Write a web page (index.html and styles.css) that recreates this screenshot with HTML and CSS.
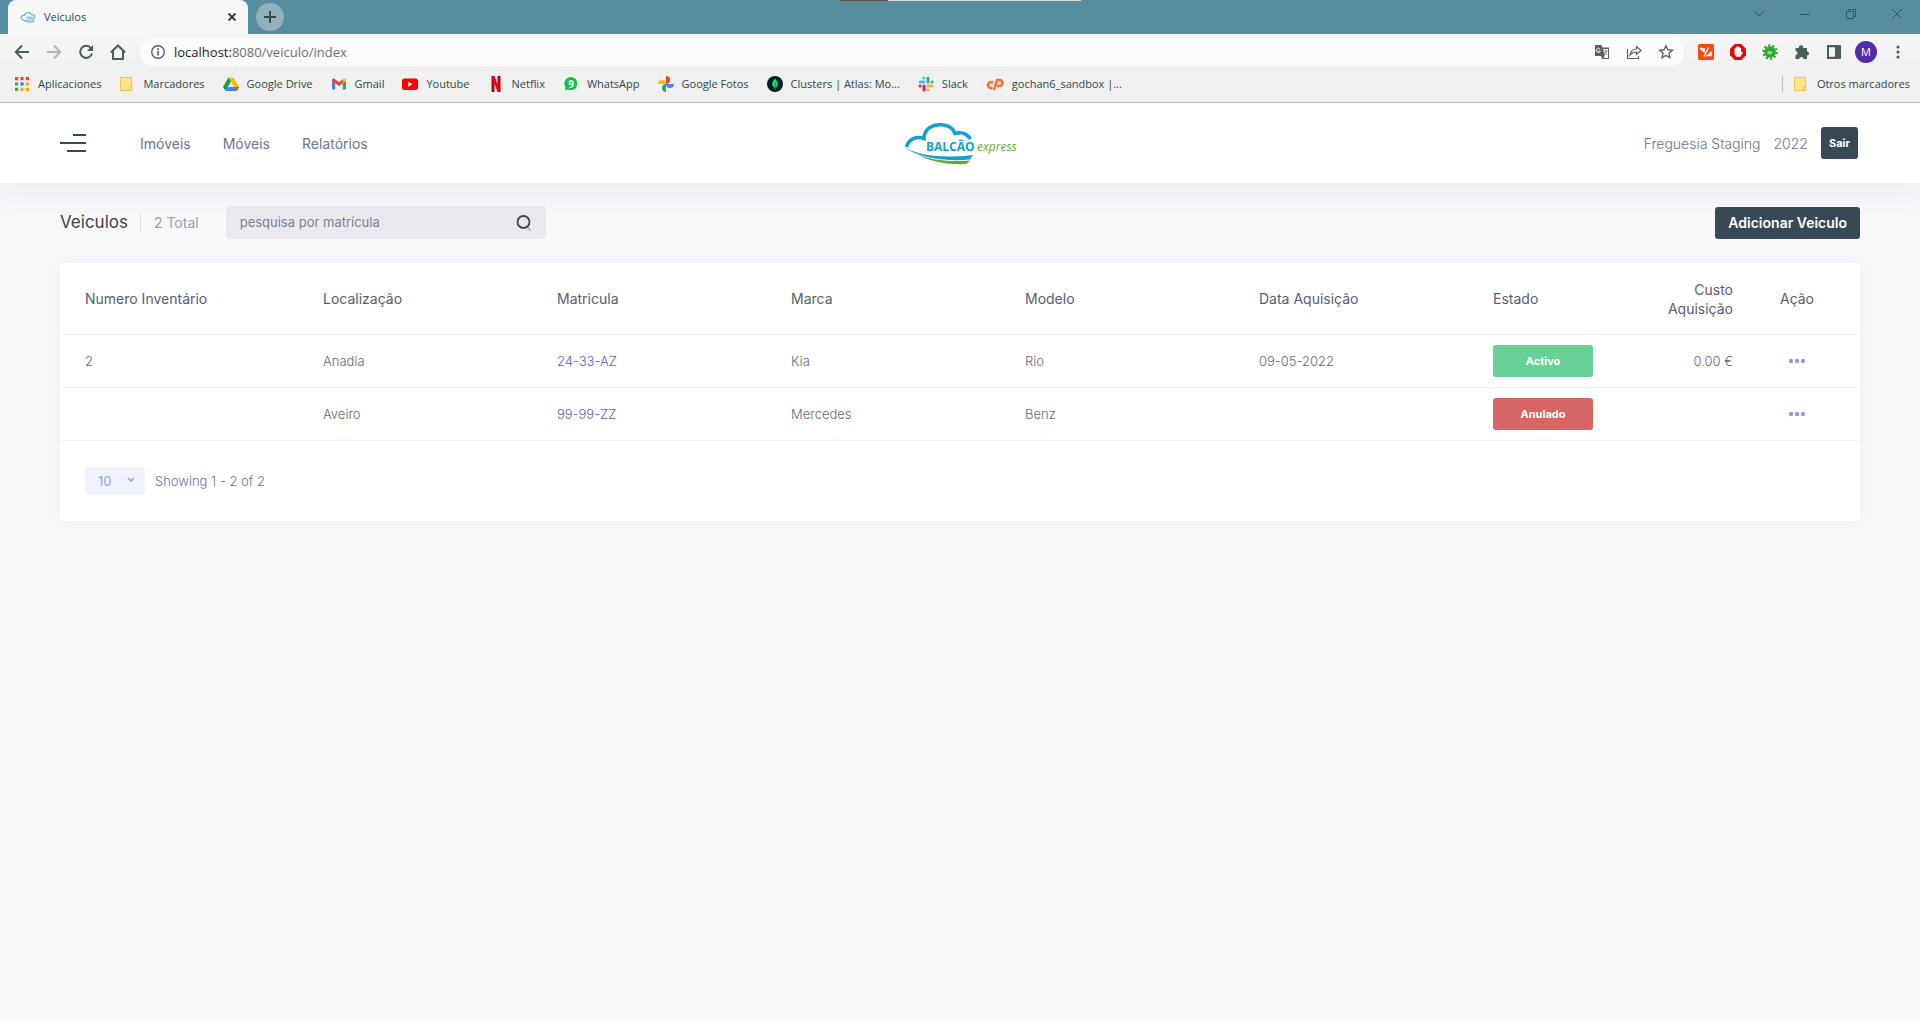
FILE: index.html
```html
<!DOCTYPE html>
<html lang="pt">
<head>
<meta charset="utf-8">
<meta name="viewport" content="width=device-width, initial-scale=1">
<title>Veiculos</title>
<link rel="stylesheet" href="styles.css">
</head>
<body>
<div class="browser">
  <div class="tabstrip">
    <div class="top-mark"></div>
    <div class="tab">
      <svg class="favicon" width="16" height="16" viewBox="0 0 16 16"><path d="M1 9.500C1 7 3 6 4.500 6.500 5 3.500 10 2.500 11.500 5.500 14 5.500 15 7 15 8" fill="none" stroke="#4fb0d8" stroke-width="1.200"/><path d="M6 7.500h9v3H7z" fill="#9ccbe0"/><path d="M1 10c4 2 8 2.500 13 1.500" fill="none" stroke="#4fb0d8"/><path d="M4 12c4 1.500 7 1.500 10 .8" fill="none" stroke="#9ccf7a" stroke-width="1.200"/></svg>
      <span class="tab-title">Veiculos</span>
      <button class="icon-button tab-close" aria-label="Fechar separador"><svg width="10" height="10" viewBox="0 0 10 10"><path d="M1.500 1.500l7 7M8.500 1.500l-7 7" stroke="#27413f" stroke-width="1.800"/></svg></button>
    </div>
    <button class="new-tab" aria-label="Novo separador"><svg width="12" height="12" viewBox="0 0 12 12"><path d="M6 0v12M0 6h12" stroke="#2c4a50" stroke-width="2"/></svg></button>
    <div class="window-controls">
      <button class="icon-button" aria-label="Procurar separadores"><svg width="12" height="12" viewBox="0 0 12 12"><path d="M1 3l5 5 5-5" fill="none" stroke="#33565f"/></svg></button>
      <button class="icon-button" aria-label="Minimizar"><svg width="12" height="12" viewBox="0 0 12 12"><path d="M1 6.500h10" stroke="#33565f"/></svg></button>
      <button class="icon-button" aria-label="Restaurar"><svg width="12" height="12" viewBox="0 0 12 12"><path d="M1.500 3.500h7v7h-7zM3.500 3.500v-2h7v7h-2" fill="none" stroke="#33565f"/></svg></button>
      <button class="icon-button" aria-label="Fechar"><svg width="12" height="12" viewBox="0 0 12 12"><path d="M1 1l10 10M11 1L1 11" stroke="#33565f"/></svg></button>
    </div>
  </div>
  <div class="toolbar">
    <button class="icon-button" aria-label="Voltar"><svg width="16" height="16" viewBox="0 0 16 16"><path d="M15 8H2.500M8 1.500L1.800 8 8 14.500" fill="none" stroke="#48605c" stroke-width="2"/></svg></button>
    <button class="icon-button" aria-label="Avançar"><svg width="16" height="16" viewBox="0 0 16 16"><path d="M1 8h12.500M8 1.500L14.200 8 8 14.500" fill="none" stroke="#b0b7b5" stroke-width="2"/></svg></button>
    <button class="icon-button" aria-label="Recarregar"><svg width="16" height="16" viewBox="0 0 16 16"><path d="M13 4.200A6 6 0 1 0 14 9.500" fill="none" stroke="#48605c" stroke-width="2"/><path d="M15 1v6H9z" fill="#48605c"/></svg></button>
    <button class="icon-button" aria-label="Página inicial"><svg width="16" height="16" viewBox="0 0 16 16"><path d="M.8 8.500L8 1.500l7.200 7M3 7v8h10V7" fill="none" stroke="#48605c" stroke-width="2"/></svg></button>
    <div class="omnibox">
      <svg width="16" height="16" viewBox="0 0 16 16"><circle cx="8" cy="8" r="6.300" fill="none" stroke="#5c6063" stroke-width="1.400"/><path d="M8 7v4.500M8 4.300v1.700" stroke="#5c6063" stroke-width="1.700"/></svg>
      <span class="url"><span class="url-host">localhost:</span>8080/veiculo/index</span>
      <button class="icon-button" aria-label="Traduzir"><svg width="16" height="16" viewBox="0 0 16 16"><path d="M1 1h6.500l1 2.500H15V15H8l-1-3H1z" fill="#5c6063"/><path d="M9 5h5v9H9.500l1.300-2.500z" fill="#fff"/><path d="M10 7h3.500M11.700 6v1M10.500 10.500L13 7.500M10.700 8.500L13 11" stroke="#5c6063" fill="none" stroke-width=".8"/><path d="M6 5.200A2 2 0 1 0 6.300 7H4.500" fill="none" stroke="#fff"/></svg></button>
      <button class="icon-button" aria-label="Partilhar"><svg width="16" height="16" viewBox="0 0 16 16"><path d="M1.500 5v9.500h11V12M4 11c.5-4 3-6 6.500-6V2.500L15 6.500l-4.500 4V8C7.500 8 5.500 9 4 11z" fill="none" stroke="#5c6063" stroke-width="1.200"/></svg></button>
      <button class="icon-button" aria-label="Adicionar aos marcadores"><svg width="16" height="16" viewBox="0 0 16 16"><path d="M8 1.800l1.900 4 4.400.5-3.300 3 .9 4.400L8 11.500l-3.900 2.200.9-4.400-3.300-3 4.400-.5z" fill="none" stroke="#5c6063" stroke-width="1.400"/></svg></button>
    </div>
    <button class="icon-button" aria-label="Extensão laranja"><svg width="16" height="16" viewBox="0 0 16 16"><rect width="16" height="16" rx="1.500" fill="#ff4a0d"/><path d="M1.800 4.500h3.400M2.200 4.500L6 7.500V4M10.500 3.500L6 12.500M14 11.500H9.500L13 8.200v3" fill="none" stroke="#fff" stroke-width="1.400"/></svg></button>
    <button class="icon-button" aria-label="Bloqueador de anúncios"><svg width="16" height="16" viewBox="0 0 16 16"><path d="M4.700 0h6.600L16 4.700v6.600L11.300 16H4.700L0 11.300V4.700z" fill="#e3060c"/><path d="M4.500 8V4.500h1.300V3H7v-.8h1.400V3h1.400v1h1.300v4.500l1-.8.8.8-2.400 4.300H6.300L4.500 10z" fill="#fff"/></svg></button>
    <button class="icon-button" aria-label="Extensão verde"><svg width="16" height="16" viewBox="0 0 16 16"><circle cx="8" cy="8" r="6.600" fill="none" stroke="#2ea82e" stroke-width="2.400" stroke-dasharray="2.100 2.050"/><circle cx="8" cy="8" r="5.800" fill="#2ea82e"/><path d="M5.500 9.500L8 7M7.500 10.500l2.500-2.500" stroke="#d5f0d5" stroke-width="1.200"/></svg></button>
    <button class="icon-button" aria-label="Extensões"><svg width="16" height="16" viewBox="0 0 16 16"><path d="M1.500 4H5a2.200 2.200 0 1 1 4.200 0H13v3.500a2 2 0 1 1 0 4V15H9.500a2.100 2.100 0 0 0-4.200 0H1.500v-4a2 2 0 0 0 0-4z" fill="#48605c"/></svg></button>
    <button class="icon-button" aria-label="Painel lateral"><svg width="16" height="16" viewBox="0 0 16 16"><path d="M1 1h14v14H1zm2 2.200v9.600h6V3.200z" fill="#48605c" fill-rule="evenodd"/></svg></button>
    <button class="avatar" aria-label="Perfil">M</button>
    <button class="icon-button" aria-label="Menu"><svg width="16" height="16" viewBox="0 0 16 16" fill="#48605c"><circle cx="8" cy="3" r="1.600"/><circle cx="8" cy="8" r="1.600"/><circle cx="8" cy="13" r="1.600"/></svg></button>
  </div>
  <nav class="bookmarks" aria-label="Marcadores">
    <a href="#"><svg width="16" height="16" viewBox="0 0 16 16"><path d="M1 1h3.200v3.200H1zM6.400 1h3.200v3.200H6.400zM11.800 1H15v3.200h-3.200z" fill="#ea4335"/><path d="M1 6.400h3.200v3.200H1zM1 11.800h3.200V15H1z" fill="#34a853"/><path d="M6.400 6.400h3.200v3.200H6.400z" fill="#1a83f5"/><path d="M11.800 6.400H15v3.200h-3.200zM6.400 11.800h3.200V15H6.400zM11.800 11.800H15V15h-3.200z" fill="#fba90a"/></svg>Aplicaciones</a>
    <a href="#"><svg width="16" height="16" viewBox="0 0 16 16"><path d="M1.500 1.500h11v13h-11z" fill="#ffe48f" stroke="#ecc84f"/><path d="M10.500 10.500h2.500v4h-2.500z" fill="#ffe48f" stroke="#ecc84f"/></svg>Marcadores</a>
    <a href="#"><svg width="16" height="16" viewBox="0 0 16 16"><path d="M5.500 1.500L0 11l2.500 4L8 5.500z" fill="#13a05b"/><path d="M5.500 1.500h5L16 11h-5z" fill="#fbbc04"/><path d="M5 11h11l-2.500 4h-11z" fill="#4285f4"/><path d="M11 11h5l-2.500 4z" fill="#ea4335"/></svg>Google Drive</a>
    <a href="#"><svg width="16" height="16" viewBox="0 0 16 16"><path d="M1 3.500L4.200 6v7.500H2a1 1 0 0 1-1-1z" fill="#4285f4"/><path d="M15 3.500L11.800 6v7.500H14a1 1 0 0 0 1-1z" fill="#34a853"/><path d="M1 5V4c0-1.500 1.500-2 2.500-1.200L8 6.200l4-3v3.600L8 10 4.200 7.200z" fill="#ea4335"/><path d="M11.800 3.300c1.500-1.500 3.200-.7 3.200.9V5l-3.200 2.300z" fill="#fbbc04"/></svg>Gmail</a>
    <a href="#"><svg width="16" height="16" viewBox="0 0 16 16"><rect y="2.500" width="16" height="11.500" rx="2.500" fill="#f00"/><path d="M6.300 5.800v5l4.300-2.500z" fill="#fff"/></svg>Youtube</a>
    <a href="#"><svg width="16" height="16" viewBox="0 0 16 16"><path d="M3.500 0h3v16h-3zM9.500 0h3v16h-3z" fill="#b1060f"/><path d="M3.500 0h3l6 16h-3z" fill="#e50914"/></svg>Netflix</a>
    <a href="#"><svg width="16" height="16" viewBox="0 0 16 16"><path d="M1 15l1-3.500A7 7 0 1 1 5 14z" fill="#10c245" stroke="#fff"/><text x="8" y="11.500" class="badge-digit">9</text></svg>WhatsApp</a>
    <a href="#"><svg width="16" height="16" viewBox="0 0 16 16"><path d="M8 0a4 4 0 0 1 0 8z" fill="#ea4335"/><path d="M16 8a4 4 0 0 1-8 0z" fill="#4285f4"/><path d="M8 16a4 4 0 0 1 0-8z" fill="#34a853"/><path d="M0 8a4 4 0 0 1 8 0z" fill="#fbbc04"/></svg>Google Fotos</a>
    <a href="#"><svg width="16" height="16" viewBox="0 0 16 16"><circle cx="8" cy="8" r="8" fill="#001e2b"/><path d="M8 2.500c4 4 3 8 .3 9.500V14h-.6v-2C5 10.500 4 6.500 8 2.500z" fill="#00ed64"/><path d="M8 6v6" stroke="#087a4a" stroke-width=".8"/></svg>Clusters | Atlas: Mo...</a>
    <a href="#"><svg width="16" height="16" viewBox="0 0 16 16" fill="none" stroke-width="3" stroke-linecap="round"><path d="M2 6h4M6 2v.1" stroke="#36c5f0"/><path d="M10 2v4M14 6h.1" stroke="#2eb67d"/><path d="M10 10h4M10 14v.1" stroke="#ecb22e"/><path d="M6 10v4M2 10h.1" stroke="#e01e5a"/></svg>Slack</a>
    <a href="#"><svg width="18" height="16" viewBox="0 0 18 16" fill="none" stroke="#ff6c2c" stroke-width="2.600"><path d="M7.500 6H5a3 3 0 0 0 0 6h1.500M8 14l3-10h2.500a3 3 0 0 1 0 6H11"/></svg>gochan6_sandbox |...</a>
    <span class="bookmarks-divider"></span>
    <a href="#"><svg width="16" height="16" viewBox="0 0 16 16"><path d="M1.500 1.500h11v13h-11z" fill="#ffe48f" stroke="#ecc84f"/><path d="M10.500 10.500h2.500v4h-2.500z" fill="#ffe48f" stroke="#ecc84f"/></svg>Otros marcadores</a>
  </nav>
</div>

<header class="site-header">
  <div class="header-left">
    <button class="menu-button" aria-label="Abrir menu"><span></span><span></span><span></span></button>
    <nav class="main-nav">
      <a href="#">Imóveis</a>
      <a href="#">Móveis</a>
      <a href="#">Relatórios</a>
    </nav>
  </div>
  <a href="#" class="logo" aria-label="Balcão express">
    <svg width="120" height="48" viewBox="0 0 120 48">
      <path d="M7.500 28C9.500 20 17 17 25 19.500 25 9.500 34 5 43 5.800 50 6.500 54.500 10.500 56 14.500 62 12.500 68 14.500 71.500 20" fill="none" stroke="#11a0d2" stroke-width="3.500"/>
      <path d="M4.500 28C20 37 45 39.500 74 36L71 40.500C46 43 18 38 4.500 28z" fill="#11a0d2"/>
      <path d="M15 34C32 41.500 50 43 71.500 41.500L67 45C48 46.500 30 42 15 34z" fill="#62ab2f"/>
      <text x="27" y="32" class="logo-main">BALCÃO</text>
      <text x="78" y="32" class="logo-sub">express</text>
    </svg>
  </a>
  <div class="header-right">
    <span>Freguesia Staging</span>
    <span>2022</span>
    <button class="button button-small">Sair</button>
  </div>
</header>

<main class="content">
  <div class="subheader">
    <h1>Veiculos</h1>
    <span class="total">2 Total</span>
    <form class="search">
      <input type="text" placeholder="pesquisa por matrícula" aria-label="pesquisa por matrícula">
      <button type="button" class="icon-button" aria-label="Pesquisar"><svg width="16" height="18" viewBox="0 0 16 18"><path d="M10.500 12l4 4.500" stroke="#b3bac1" stroke-width="2"/><circle cx="7.500" cy="8" r="6" fill="none" stroke="#364954" stroke-width="1.800"/></svg></button>
    </form>
    <button class="button button-add">Adicionar Veiculo</button>
  </div>

  <section class="card">
    <table class="vehicles">
      <colgroup>
        <col class="col-number"><col class="col-text"><col class="col-text"><col class="col-text"><col class="col-text"><col class="col-text"><col class="col-state"><col class="col-cost"><col>
      </colgroup>
      <thead>
        <tr><th>Numero Inventário</th><th>Localização</th><th>Matricula</th><th>Marca</th><th>Modelo</th><th>Data Aquisição</th><th>Estado</th><th class="cost">Custo Aquisição</th><th class="action">Ação</th></tr>
      </thead>
      <tbody>
        <tr><td>2</td><td>Anadia</td><td><a href="#">24-33-AZ</a></td><td>Kia</td><td>Rio</td><td>09-05-2022</td><td><span class="state state-active">Activo</span></td><td class="cost">0.00 €</td><td class="action"><button class="icon-button" aria-label="Ações"><svg width="18" height="16" viewBox="0 0 18 16" fill="#8f9ddd"><circle cx="3" cy="8" r="2.200"/><circle cx="9" cy="8" r="2.200"/><circle cx="15" cy="8" r="2.200"/></svg></button></td></tr>
        <tr><td></td><td>Aveiro</td><td><a href="#">99-99-ZZ</a></td><td>Mercedes</td><td>Benz</td><td></td><td><span class="state state-void">Anulado</span></td><td class="cost"></td><td class="action"><button class="icon-button" aria-label="Ações"><svg width="18" height="16" viewBox="0 0 18 16" fill="#8f9ddd"><circle cx="3" cy="8" r="2.200"/><circle cx="9" cy="8" r="2.200"/><circle cx="15" cy="8" r="2.200"/></svg></button></td></tr>
      </tbody>
    </table>
    <div class="pager">
      <div class="page-size">
        <select aria-label="Registos por página"><option>10</option><option>20</option><option>50</option></select>
        <svg width="8" height="8" viewBox="0 0 8 8"><path d="M1 2l3 3 3-3" fill="none" stroke="#a3aee3" stroke-width="1.800"/></svg>
      </div>
      <span>Showing 1 - 2 of 2</span>
    </div>
  </section>
</main>
</body>
</html>
```
FILE: styles.css
```css
* { box-sizing: border-box; }

body {
  margin: 0;
  min-height: 100vh;
  background: #f9f9fc;
  color: #646c72;
  font: 300 13px/19px Inter, "Open Sans", sans-serif;
}

a { color: inherit; text-decoration: none; }
svg { display: block; flex: none; }
button, input, select { font: inherit; border: 0; padding: 0; margin: 0; }
button { cursor: pointer; }

.icon-button {
  display: flex;
  flex: none;
  align-items: center;
  justify-content: center;
  width: 16px;
  height: 16px;
  background: none;
}

/* Browser window */
.browser {
  position: relative;
  background: #f0f0f0;
  border-bottom: 1px solid #bcbcbc;
  color: #2c4845;
  font: 400 11px/16px "Open Sans", "Noto Sans", sans-serif;
}

.tabstrip {
  display: flex;
  height: 34px;
  padding-left: 8px;
  background: #568d9f;
}

.top-mark {
  position: absolute;
  top: 0;
  left: 840px;
  width: 241px;
  height: 1px;
  background: linear-gradient(90deg, #5a5a50 48px, #dcdcd8 48px);
}

.tab {
  display: flex;
  align-items: center;
  gap: 8px;
  width: 240px;
  padding: 0 8px 0 12px;
  background: #f8f8f8;
  border-radius: 8px 8px 0 0;
}

.tab-title { flex: 1; }

.new-tab {
  display: grid;
  place-items: center;
  width: 28px;
  height: 28px;
  margin: 3px 0 0 8px;
  border-radius: 50%;
  background: #93b1bc;
}

.window-controls {
  display: flex;
  align-items: center;
  gap: 30px;
  height: 28px;
  margin-left: auto;
  padding-right: 15px;
}

.toolbar {
  display: flex;
  align-items: center;
  gap: 16px;
  height: 36px;
  padding: 0 14px;
  background: linear-gradient(#f6f6f6, #f0f0f0);
}

.omnibox {
  display: flex;
  flex: 1;
  align-items: center;
  gap: 16px;
  height: 28px;
  margin: 0 -2px;
  padding: 0 10px;
  border-radius: 14px;
  background: #fcfcfc;
}

.url {
  flex: 1;
  margin-left: -8px;
  color: #6b6f71;
  font-size: 13px;
}

.url-host { color: #202124; }

.avatar {
  width: 22px;
  height: 22px;
  margin: 0 -3px;
  border-radius: 50%;
  background: #512da8;
  color: #fff;
}

.bookmarks {
  display: flex;
  align-items: center;
  gap: 18px;
  height: 32px;
  padding: 0 10px 4px 14px;
}

.bookmarks a { display: flex; align-items: center; gap: 8px; white-space: nowrap; }

.badge-digit {
  fill: #fff;
  font-size: 10px;
  font-weight: 700;
  text-anchor: middle;
}

.bookmarks-divider {
  width: 1px;
  height: 16px;
  margin: 0 -8px 0 auto;
  background: #b9c0c0;
}

/* Site header */
.site-header {
  display: grid;
  grid-template-columns: 1fr auto 1fr;
  align-items: center;
  height: 80px;
  padding: 0 62px 0 60px;
  background: #fff;
  box-shadow: 0 10px 30px rgba(82, 63, 105, .08);
}

.header-left { display: flex; align-items: center; gap: 54px; }

.menu-button {
  display: flex;
  flex-direction: column;
  align-items: flex-end;
  gap: 6px;
  width: 26px;
  background: none;
}

.menu-button span { width: 26px; height: 2px; background: #364954; }
.menu-button span:first-child { width: 13px; }
.menu-button span:last-child { width: 19px; }

.main-nav {
  display: flex;
  gap: 32px;
  color: #6c7293;
  font-size: 14px;
  font-weight: 400;
}

.logo-main { fill: #11a0d2; font: 700 12px "Open Sans", sans-serif; }
.logo-sub { fill: #62ab2f; font: italic 400 12px "Open Sans", sans-serif; }

.header-right {
  display: flex;
  align-items: center;
  justify-content: flex-end;
  gap: 13px;
  color: #6c7293;
  font-size: 14px;
}

.button {
  height: 32px;
  border-radius: 3px;
  background: #364954;
  color: #fff;
  font-weight: 600;
}

.button-small { padding: 0 8px; font-size: 11px; font-weight: 700; }
.button-add { margin-left: auto; padding: 0 13px; font-size: 14px; }

/* Page content */
.content { padding: 23px 60px; }

.subheader {
  display: flex;
  align-items: center;
  height: 33px;
  margin-bottom: 24px;
}

.subheader h1 {
  margin: 0;
  padding-right: 12px;
  color: #434349;
  font-size: 17px;
  font-weight: 400;
}

.total {
  padding-left: 13px;
  border-left: 1px solid #dcdfe8;
  color: #959cb6;
  font-size: 14px;
  font-weight: 400;
}

.search {
  display: flex;
  align-items: center;
  width: 320px;
  height: 33px;
  margin-left: 27px;
  padding: 0 14px;
  border-radius: 4px;
  background: #e9eaf0;
}

.search input {
  flex: 1;
  min-width: 0;
  background: none;
  color: #646c72;
  font-weight: 400;
  outline: 0;
}

.search input::placeholder { color: #7c8090; }

.card {
  border-radius: 4px;
  background: #fff;
  box-shadow: 0 0 13px rgba(82, 63, 105, .05);
}

.vehicles { width: 100%; border-spacing: 0; table-layout: fixed; }
.col-number { width: 14%; }
.col-text { width: 13%; }
.col-state { width: 9%; }
.col-cost { width: 100px; }

.vehicles th,
.vehicles td {
  padding: 10px 11px;
  border-bottom: 1px solid #f0f0fc;
  text-align: left;
}

.vehicles th { height: 72px; color: #595d6e; font-size: 14px; font-weight: 400; }
.vehicles td { height: 53px; }
.vehicles th:first-child,
.vehicles td:first-child { padding-left: 25px; }
.vehicles .cost { text-align: right; }
.vehicles .action { padding-right: 21px; text-align: center; }
.vehicles .icon-button { margin: 0 auto; }
.vehicles td a { color: #5d5bd5; }

.state {
  display: block;
  width: 100px;
  border-radius: 3px;
  color: #fff;
  font-size: 11px;
  font-weight: 700;
  line-height: 32px;
  text-align: center;
}

.state-active { background: #67d197; }
.state-void { background: #d86565; }

.pager {
  display: flex;
  align-items: center;
  gap: 10px;
  padding: 26px 25px;
  color: #6c7293;
}

.page-size { position: relative; width: 60px; height: 28px; }

.page-size select {
  width: 100%;
  height: 100%;
  padding: 0 13px;
  border-radius: 4px;
  appearance: none;
  background: #f0f3ff;
  color: #93a2dd;
  font-weight: 400;
}

.page-size svg { position: absolute; top: 9px; right: 10px; pointer-events: none; }
```
